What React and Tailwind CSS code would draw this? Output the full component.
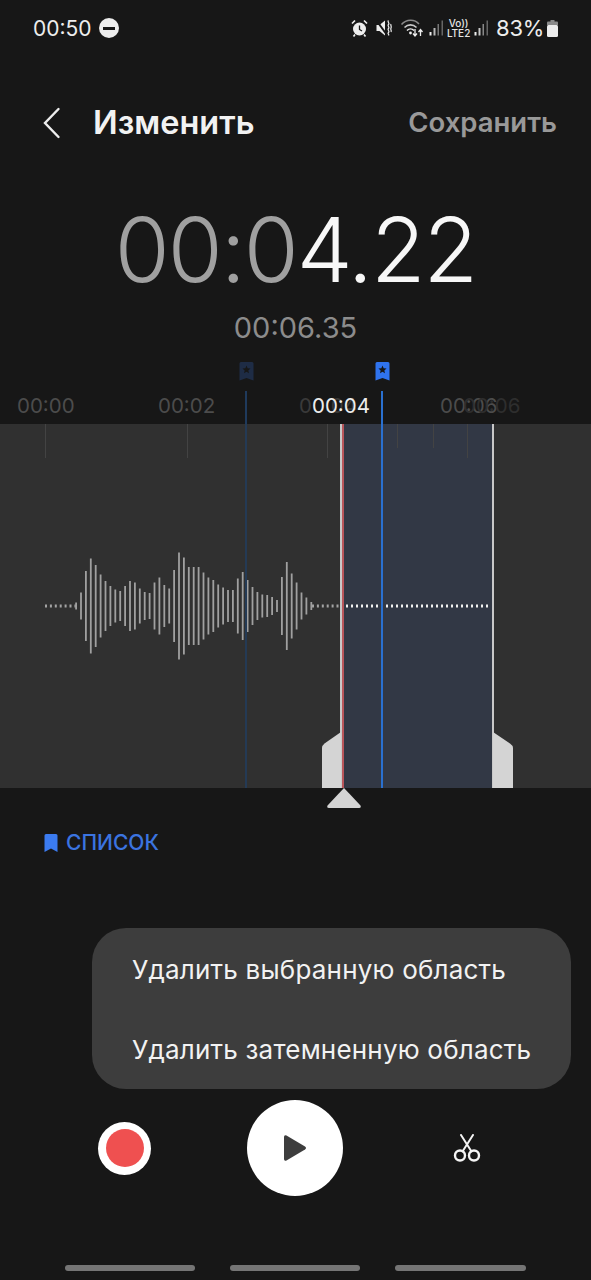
const BARS = [7, 27, 70, 95, 82, 63, 50, 40, 33, 30, 40, 50, 47, 35, 28, 26, 47, 57, 42, 35, 72, 107, 97, 78, 78, 78, 67, 57, 52, 43, 37, 32, 32, 55, 68, 52, 38, 28, 23, 22, 18, 12, 58, 88, 65, 47, 27, 17, 8];
const TICKS = [[45, 34], [187, 34], [327, 34], [397, 24], [433, 24], [467, 34]];

function Waveform() {
  const dots = [];
  for (let x = 45; x < 75; x += 4.9) dots.push(x);
  const tail = [];
  for (let x = 312; x < 341; x += 4.9) tail.push(x);
  const selected = [];
  for (let x = 346; x < 491; x += 5) selected.push(x);
  return (
    <svg className="absolute left-0 top-0" width="591" height="364" viewBox="0 424 591 364">
      {dots.concat(tail).map((x) => (
        <rect key={x} x={x} y="604.5" width="2" height="3" fill="#a3a3a3" />
      ))}
      {BARS.map((h, i) => (
        <rect key={i} x={75.2 + i * 4.9} y={606 - h / 2} width="1.8" height={h} fill="#a0a0a0" />
      ))}
      {selected.map((x) => (
        <rect key={x} x={x} y="604.5" width="2" height="3" fill="#f0f0f0" />
      ))}
    </svg>
  );
}

function Bookmark({ color, star }) {
  return (
    <svg width="15" height="19" viewBox="0 0 15 19">
      <path d="M2 0h11a1.500 1.500 0 0 1 1.500 1.500V18.500L7.500 16 .5 18.500V1.500A1.500 1.500 0 0 1 2 0z" fill={color} />
      <path d="M7.500 3.600l1.150 2.700 2.900.25-2.200 1.900.66 2.850-2.510-1.500-2.510 1.500.66-2.850-2.200-1.900 2.900-.25z" fill={star} />
    </svg>
  );
}

function Signal({ bars }) {
  return (
    <svg width="14" height="16" viewBox="0 0 14 16">
      <rect x="0.500" y="12" width="2" height="3.500" fill={bars[0]} />
      <rect x="4.500" y="8" width="2" height="7.500" fill={bars[1]} />
      <rect x="8.500" y="4" width="1.500" height="11.500" fill={bars[2]} />
      <rect x="12.500" y="0.500" width="1.500" height="15" fill={bars[3]} />
    </svg>
  );
}

function StatusIcons() {
  return (
    <div className="flex items-center text-[#ededed]">
      <svg width="17" height="18" viewBox="0 0 17 18" className="mr-[8px]">
        <circle cx="8.500" cy="10" r="6.500" fill="currentColor" />
        <path d="M8.500 6.500v4l2.500 1.500" fill="none" stroke="#171717" strokeWidth="1.300" />
        <path d="M1 4.500L4 1.500M16 4.500L13 1.500M4 15.500L2.500 17.500M13 15.500l1.500 2" stroke="currentColor" strokeWidth="1.700" fill="none" />
      </svg>
      <svg width="16" height="18" viewBox="0 0 16 18" className="mr-[8px]">
        <path d="M0.500 6h3l5.500-4.500v15L3.500 12h-3z" fill="currentColor" />
        <path d="M0.500 1.500L11 16" stroke="#171717" strokeWidth="2" />
        <path d="M12.500 1.500c-1.500 1.500 1.500 2.500 0 4s1.500 2.500 0 4 1.500 2.500 0 4 1 1.500 0 3M15 5c-.8 1 .8 2 0 4s.8 2 0 4" fill="none" stroke="currentColor" strokeWidth="1.200" />
      </svg>
      <svg width="24" height="20" viewBox="0 0 23 20" className="mr-[5px]">
        <path d="M1 6.500C6 1 14 1 18.500 6" fill="none" stroke="#8a8a8a" strokeWidth="1.600" />
        <path d="M4 9.500C7.500 6 12.500 6 16 9.500" fill="none" stroke="#c8c8c8" strokeWidth="1.600" />
        <path d="M6.500 12.500c2-2 5-2 7 0" fill="none" stroke="#ededed" strokeWidth="1.600" />
        <circle cx="10" cy="15" r="1.400" fill="currentColor" />
        <path d="M14.500 11v7M12.500 15.500l2 2.500 2-2.500M20 18v-6.500M18 14l2-2.500 2 2.500" fill="none" stroke="currentColor" strokeWidth="1.300" />
      </svg>
      <div className="mr-[5px]"><Signal bars={["#ededed", "#b8b8b8", "#777", "#666"]} /></div>
      <div className="mr-[5px] flex w-[21px] flex-col items-center text-[10px] leading-[10px] font-medium text-[#e5e5e5]">
        <span>Vo))</span>
        <span>LTE2</span>
      </div>
      <div className="mr-[8px]"><Signal bars={["#ededed", "#c8c8c8", "#888", "#666"]} /></div>
      <span className="text-[22px] leading-none tracking-[-0.3px] text-[#ededed]">83%</span>
      <svg width="11" height="17" viewBox="0 0 11 17" className="ml-[3px]">
        <rect x="3.500" y="0" width="4" height="2" fill="#8a8a8a" />
        <rect x="0" y="1.500" width="11" height="4" rx="1" fill="#8a8a8a" />
        <rect x="0" y="5" width="11" height="12" rx="1.500" fill="#ededed" />
      </svg>
    </div>
  );
}

function Timeline() {
  return (
    <div className="relative h-[432px] w-full">
      {/* markers above track */}
      <div className="absolute left-[239px] top-[6px] opacity-30"><Bookmark color="#2f5fb0" star="#171717" /></div>
      <div className="absolute left-[375px] top-[6px]"><Bookmark color="#2f73ee" star="#171717" /></div>

      <span className="absolute left-[17px] top-[37px] text-[20.500px] leading-[26px] text-[#4c4c4c]">00:00</span>
      <span className="absolute left-[158px] top-[37px] text-[20.500px] leading-[26px] text-[#4c4c4c]">00:02</span>
      <span className="absolute left-[299px] top-[37px] text-[20.500px] leading-[26px] text-[#3a3a3a]">00:04</span>
      <span className="absolute left-[440px] top-[37px] text-[20.500px] leading-[26px] text-[#4c4c4c]">00:06</span>
      <span className="absolute left-[463px] top-[37px] text-[20.500px] leading-[26px] text-[#2e2e2e]">00:06</span>
      <span className="absolute left-[312px] top-[37px] text-[20.500px] leading-[26px] text-[#ededed]">00:04</span>

      <div className="absolute left-0 right-0 top-[68px] h-[364px] overflow-hidden bg-[#303030]">
        <div className="absolute bottom-0 left-[343px] top-0 w-[150px] bg-[#323845]" />
        {TICKS.map(([x, h]) => (
          <div key={x} className="absolute top-0 w-px bg-[#434343]" style={{ left: x, height: h }} />
        ))}
        <Waveform />
        <div className="absolute bottom-0 left-[245px] top-0 w-[2px] bg-[#243a55]" />
        <div className="absolute bottom-0 left-[340px] top-0 w-[2px] bg-[#c8c8c8]" />
        <div className="absolute bottom-0 left-[342px] top-0 w-[2px] bg-[#b9565b]" />
        <div className="absolute bottom-0 left-[381px] top-0 w-[2px] bg-[#2a70d0]" />
        <div className="absolute bottom-0 left-[492px] top-0 w-[2px] bg-[#c8c8c8]" />
        <svg className="absolute bottom-0 left-[322px]" width="20" height="56" viewBox="0 0 20 56">
          <path d="M19 0L2.500 11.500Q0 13.500 0 16V56H19V0z" fill="#d4d4d4" />
        </svg>
        <svg className="absolute bottom-0 left-[493px]" width="20" height="56" viewBox="0 0 20 56">
          <path d="M0 0L17 11.500Q20 13.500 20 16V56H0V0z" fill="#d4d4d4" />
        </svg>
      </div>
      <div className="absolute left-[245px] top-[35px] h-[33px] w-[2px] bg-[#1f3a5c]" />
      <div className="absolute left-[381px] top-[35px] h-[33px] w-[2px] bg-[#2a70d0]" />
    </div>
  );
}

export default function App() {
  return (
    <div className="relative h-[1280px] w-[591px] overflow-hidden bg-[#171717] font-['Inter',sans-serif]">
      <div className="flex h-[56px] items-center justify-between pl-[33px] pr-[33px]">
        <div className="flex items-center gap-[7px]">
          <span className="text-[21px] leading-none text-[#ededed]">00:50</span>
          <div className="flex h-[20px] w-[20px] items-center justify-center rounded-full bg-[#ededed]">
            <div className="h-[3px] w-[12px] bg-[#171717]" />
          </div>
        </div>
        <StatusIcons />
      </div>

      <div className="mt-[42px] flex h-[50px] items-center justify-between pl-[42px] pr-[34px]">
        <div className="flex items-center gap-[32px]">
          <svg width="19" height="32" viewBox="0 0 19 32">
            <path d="M16.500 2L3 16l13.500 14" fill="none" stroke="#ededed" strokeWidth="2.400" strokeLinecap="round" />
          </svg>
          <span className="text-[32.500px] font-semibold leading-none text-[#f2f2f2]">Изменить</span>
        </div>
        <span className="text-[27.500px] font-semibold leading-none text-[#999999]">Сохранить</span>
      </div>

      <div className="mt-[51px] flex h-[100px] items-center justify-center text-[89px] font-light leading-none tracking-[-2px]">
        <span className="text-[#a0a0a0]">00:0</span>
        <span className="text-[#f7f7f7]">4.22</span>
      </div>

      <div className="mt-[12px] text-center text-[29px] leading-[34px] text-[#8c8c8c]">00:06.35</div>

      <div className="mt-[11px]">
        <Timeline />
      </div>

      <svg className="absolute left-[327px] top-[788px]" width="34" height="20" viewBox="0 0 34 20">
        <path d="M17 0L33.500 17.500Q34.500 20 32 20H2Q-.500 20 .500 17.500z" fill="#d4d4d4" />
      </svg>

      <div className="mt-[41px] flex items-center gap-[8px] pl-[44px]">
        <svg width="14" height="18" viewBox="0 0 14 18">
          <path d="M2 0h10a1.500 1.500 0 0 1 1.500 1.500V18L7 14.500.5 18V1.500A1.500 1.500 0 0 1 2 0z" fill="#3b7bf0" />
        </svg>
        <span className="text-[21px] font-medium leading-[28px] text-[#3b74e0]">СПИСОК</span>
      </div>

      <div className="absolute left-[92px] top-[928px] flex h-[161px] w-[479px] flex-col justify-center gap-[50px] rounded-[34px] bg-[#3d3d3d] pl-[40px] pt-[2px] text-[26px] leading-[30px] tracking-[0.2px] text-[#f2f2f2]">
        <span>Удалить выбранную область</span>
        <span>Удалить затемненную область</span>
      </div>

      <div className="absolute left-[98px] top-[1100px] flex h-[96px] w-[393px] items-center">
        <div className="flex h-[53px] w-[53px] items-center justify-center rounded-full bg-white">
          <div className="h-[38px] w-[38px] rounded-full bg-[#ef5050]" />
        </div>
        <div className="ml-[96px] flex h-[96px] w-[96px] items-center justify-center rounded-full bg-white">
          <svg width="24" height="28" viewBox="0 0 24 28">
            <path d="M1 3Q1 .500 3.500 1.500L22 12.500Q24 14 22 15.500L3.500 26.500Q1 27.500 1 25z" fill="#3d3d3d" />
          </svg>
        </div>
        <svg width="28" height="28" viewBox="0 0 28 28" className="ml-[110px]">
          <circle cx="7" cy="21.500" r="5" fill="none" stroke="#f5f5f5" strokeWidth="2.400" />
          <circle cx="21" cy="21.500" r="5" fill="none" stroke="#f5f5f5" strokeWidth="2.400" />
          <path d="M9.500 17.500L20 1M18.500 17.500L8 1" fill="none" stroke="#f5f5f5" strokeWidth="2" strokeLinecap="round" />
        </svg>
      </div>

      <div className="absolute bottom-[9px] left-[65px] flex gap-[35px]">
        <div className="h-[6px] w-[130px] rounded-[3px] bg-[#757575]" />
        <div className="h-[6px] w-[130px] rounded-[3px] bg-[#757575]" />
        <div className="h-[6px] w-[131px] rounded-[3px] bg-[#757575]" />
      </div>
    </div>
  );
}
